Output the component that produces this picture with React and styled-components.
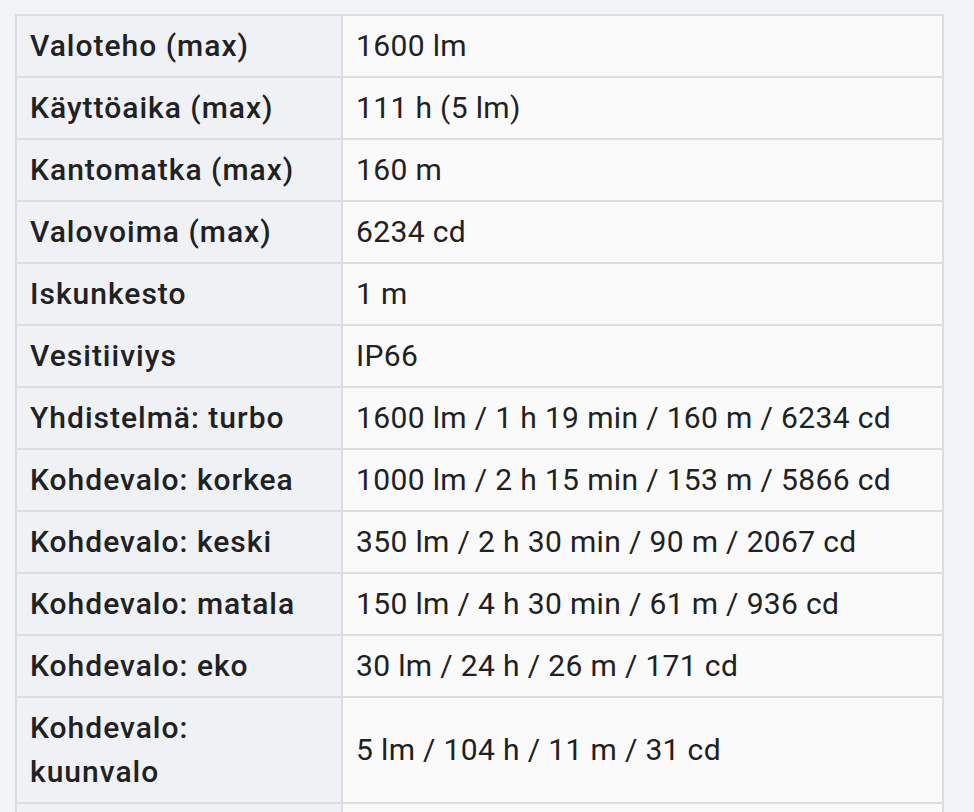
import React from 'react';
import styled, { createGlobalStyle } from 'styled-components';

const GlobalStyle = createGlobalStyle`
  html, body {
    margin: 0;
    padding: 0;
    background: #f2f3f7;
  }
  body {
    font-family: Roboto, "Liberation Sans", sans-serif;
    color: #202122;
  }
`;

const Page = styled.div`
  padding: 14px 30px 0 15px;
`;

const SpecTable = styled.table`
  width: 929px;
  border-collapse: collapse;
  table-layout: fixed;
  border: 2px solid #dcdde2;
  font-size: 30px;
  line-height: 44px;
`;

const Row = styled.tr`
  border-bottom: 2px solid #dcdde2;
`;

const Label = styled.th`
  width: 281px;
  background: #f0f1f5;
  border-right: 2px solid #dcdde2;
  font-weight: 500;
  letter-spacing: 1px;
  text-align: left;
  vertical-align: middle;
  padding: 8px 30px 8px 13px;
`;

const Value = styled.td`
  background: #fafafa;
  font-weight: 400;
  letter-spacing: 0.35px;
  vertical-align: middle;
  padding: 8px 13px;
`;

const specs = [
  ['Valoteho (max)', '1600 lm'],
  ['Käyttöaika (max)', '111 h (5 lm)'],
  ['Kantomatka (max)', '160 m'],
  ['Valovoima (max)', '6234 cd'],
  ['Iskunkesto', '1 m'],
  ['Vesitiiviys', 'IP66'],
  ['Yhdistelmä: turbo', '1600 lm / 1 h 19 min / 160 m / 6234 cd'],
  ['Kohdevalo: korkea', '1000 lm / 2 h 15 min / 153 m / 5866 cd'],
  ['Kohdevalo: keski', '350 lm / 2 h 30 min / 90 m / 2067 cd'],
  ['Kohdevalo: matala', '150 lm / 4 h 30 min / 61 m / 936 cd'],
  ['Kohdevalo: eko', '30 lm / 24 h / 26 m / 171 cd'],
  ['Kohdevalo: kuunvalo', '5 lm / 104 h / 11 m / 31 cd'],
  ['Hajavalo: korkea', '600 lm / 2 h 45 min / 40 m / 400 cd'],
];

const App = () => {
  return (
    <Page>
      <GlobalStyle />
      <SpecTable>
        <tbody>
          {specs.map(([label, value]) => (
            <Row key={label}>
              <Label>{label}</Label>
              <Value>{value}</Value>
            </Row>
          ))}
        </tbody>
      </SpecTable>
    </Page>
  );
};

export default App;
